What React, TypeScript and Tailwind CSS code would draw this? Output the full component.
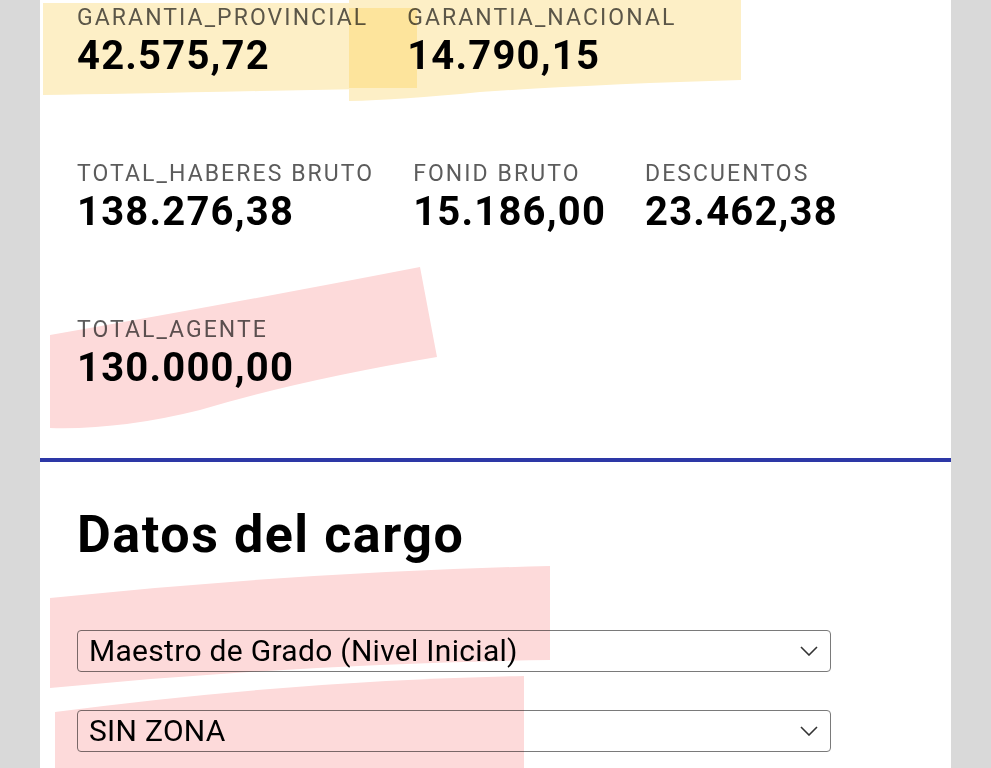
const ROW_1 = [
  { label: "GARANTIA_PROVINCIAL", value: "42.575,72" },
  { label: "GARANTIA_NACIONAL", value: "14.790,15" },
];

const ROW_2 = [
  { label: "TOTAL_HABERES BRUTO", value: "138.276,38" },
  { label: "FONID BRUTO", value: "15.186,00" },
  { label: "DESCUENTOS", value: "23.462,38" },
];

const ROW_3 = [{ label: "TOTAL_AGENTE", value: "130.000,00" }];

const Stat = ({ label, value }: { label: string; value: string }) => (
  <div className="flex flex-col">
    <span className="text-[23px] leading-[30px] tracking-[0.09em] text-[#5c5c5c]">
      {label}
    </span>
    <span className="text-[40px] leading-[46px] font-bold tracking-[0.03em] text-black">
      {value}
    </span>
  </div>
);

const StatRow = ({ items }: { items: { label: string; value: string }[] }) => (
  <div className="flex h-[156px] gap-x-[39px]">
    {items.map((item) => (
      <Stat key={item.label} {...item} />
    ))}
  </div>
);

const Select = ({ value }: { value: string }) => (
  <div className="flex h-[42px] w-[754px] items-center justify-between rounded-[4px] border border-[#7a7a7a] bg-white pl-[11px] pr-[12px]">
    <span className="text-[30px] leading-none tracking-[0.01em] text-black">{value}</span>
    <svg width="18" height="10" viewBox="0 0 18 10" fill="none">
      <path d="M1 1l8 8 8-8" stroke="#333" strokeWidth="1.6" />
    </svg>
  </div>
);

const Highlights = () => (
  <svg
    className="pointer-events-none absolute inset-0 mix-blend-multiply"
    width="991"
    height="768"
    viewBox="0 0 991 768"
  >
    <path d="M43 3 L417 3 L417 88 L260 91 Q120 94 43 95 Z" fill="#fdefc6" />
    <path d="M349 0 L741 0 L741 80 Q600 84 480 92 Q400 100 349 101 Z" fill="#fdefc6" />
    <rect x="349" y="8" width="68" height="80" fill="#fde49c" />
    <path d="M50 335 Q250 300 420 267 L437 357 Q300 380 200 410 Q120 430 50 428 Z" fill="#fddada" />
    <path d="M50 598 Q300 572 550 566 L550 660 Q300 664 50 688 Z" fill="#fddada" />
    <path d="M55 712 Q300 680 524 676 L524 768 L55 768 Z" fill="#fddada" />
  </svg>
);

export default function App() {
  return (
    <div className="relative h-[768px] w-[991px] overflow-hidden bg-[#d9d9d9] font-['Roboto',sans-serif]">
      <div className="ml-[40px] h-full w-[911px] bg-white pt-[3px]">
        <div className="pl-[37px]">
          <StatRow items={ROW_1} />
          <StatRow items={ROW_2} />
          <StatRow items={ROW_3} />
        </div>
        <div className="mt-[-13px] h-[4px] w-full bg-[#2d38a6]" />
        <div className="pl-[37px]">
          <h2 className="mt-[43px] text-[52px] leading-[60px] font-bold tracking-[0.03em] text-black">
            Datos del cargo
          </h2>
          <div className="mt-[65px] flex flex-col gap-[38px]">
            <Select value="Maestro de Grado (Nivel Inicial)" />
            <Select value="SIN ZONA" />
          </div>
        </div>
      </div>
      <Highlights />
    </div>
  );
}
